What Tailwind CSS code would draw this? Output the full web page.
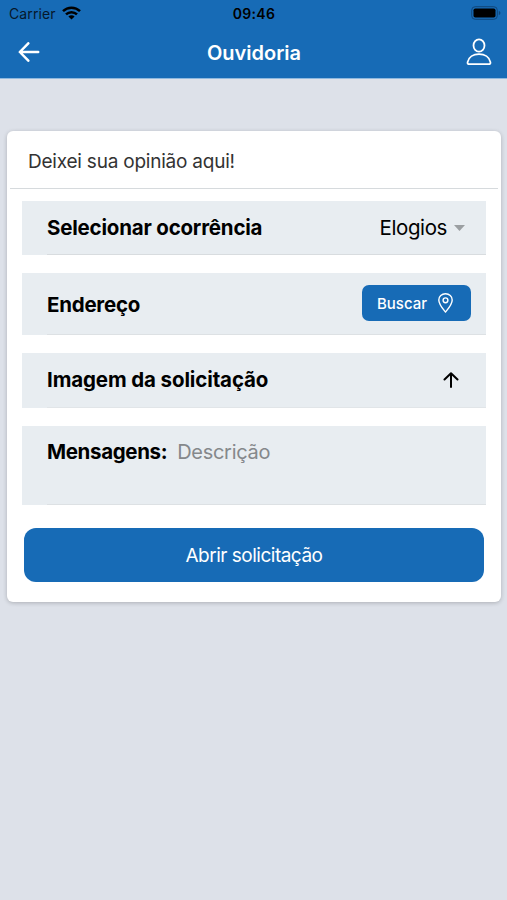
<!DOCTYPE html>
<html lang="pt-BR">
<head>
    <meta charset="UTF-8">
    <meta name="viewport" content="width=device-width, initial-scale=1.0">
    <title>Ouvidoria</title>
    <script src="https://cdn.jsdelivr.net/npm/@tailwindcss/browser@4"></script>
</head>
<body class="min-h-screen bg-[#dde1e9] font-['Inter',sans-serif] text-black">
    <!-- Cabeçalho -->
    <header class="h-[79px] bg-[#176bb6] border-b border-[#8fb9df]">
        <div class="grid grid-cols-3 items-center h-[27px] pl-[7px] pr-[6px] text-[#06182b]">
            <div class="flex items-center gap-[6px] pl-[2px]">
                <span class="text-[14px] tracking-[0.1px]">Carrier</span>
                <svg class="w-[19px] h-[14px] mb-[2px]" viewBox="0 0 19 14" fill="none" stroke="black" stroke-width="2.5">
                    <path d="M1 5.200a12.200 12.200 0 0 1 17 0"/>
                    <path d="M4 8.400a7.900 7.900 0 0 1 11 0"/>
                    <path d="M9.500 13.600 6.400 10.500a4.400 4.400 0 0 1 6.200 0Z" fill="black" stroke="none"/>
                </svg>
            </div>
            <span class="text-center text-[14px] font-semibold tracking-[0.35px] text-black">09:46</span>
            <svg class="justify-self-end w-[30px] h-[14px] mb-px" viewBox="0 0 30 14">
                <rect x=".7" y=".7" width="25.6" height="12.6" rx="3.5" fill="none" stroke="#10477b"/>
                <rect x="2.5" y="2.5" width="22" height="9" rx="1.8" fill="black"/>
                <path d="M27.800 5v4c1-.4 1.600-1.100 1.600-2s-.6-1.600-1.600-2Z" fill="#10477b"/>
            </svg>
        </div>
        <div class="grid grid-cols-3 items-center h-[50px] pl-[18px] pr-[15px] text-white">
            <button class="justify-self-start">
                <svg class="w-[22px] h-[20px]" viewBox="0 0 22 20" fill="none" stroke="currentColor" stroke-width="2.5" stroke-linecap="round" stroke-linejoin="round">
                    <path d="M10.300 1.300 1.800 10l8.500 8.700M2 10h18.200"/>
                </svg>
            </button>
            <h1 class="text-center text-[20px] font-semibold pt-px -ml-[2px]">Ouvidoria</h1>
            <button class="justify-self-end">
                <svg class="w-[26px] h-[28px]" viewBox="0 0 26 28" fill="none" stroke="currentColor" stroke-width="1.8" stroke-linejoin="round">
                    <ellipse cx="13" cy="7.5" rx="5.5" ry="6.2"/>
                    <path d="M3.300 26.200c-1.400 0-2-.9-1.700-2.100C2.700 19.200 7.300 16.200 13 16.200s10.300 3 11.400 7.900c.3 1.200-.3 2.100-1.700 2.100Z"/>
                </svg>
            </button>
        </div>
    </header>

    <!-- Formulário -->
    <main class="mt-[52px] ml-[7px] mr-[6px] h-[471px] rounded-[6px] bg-white shadow-[0_1px_4px_rgba(0,0,0,0.22)]">
        <div class="mx-[3px] flex items-center h-[58px] pl-[18px] pt-[5px] border-b border-[#d6dadd]">
            <p class="text-[19px] text-[#333] tracking-[-0.22px]">Deixei sua opinião aqui!</p>
        </div>

        <div class="flex flex-col gap-[18px] pt-3 px-[15px]">
            <div class="bg-[#e8edf1] pl-[25px]">
                <div class="flex items-center justify-between h-[54px] pr-[21px] border-b border-[#d8dcdf]">
                    <span class="text-[20.5px] font-bold tracking-[-0.2px] pt-[2px]">Selecionar ocorrência</span>
                    <div class="flex items-center gap-[7px]">
                        <span class="text-[20.5px] tracking-[-0.4px] pt-[2px]">Elogios</span>
                        <svg class="w-[11px] h-[6px]" viewBox="0 0 11 6" fill="#9b9fa2"><path d="M0 0h11L5.500 6Z"/></svg>
                    </div>
                </div>
            </div>

            <div class="bg-[#e8edf1] pl-[25px]">
                <div class="flex items-center justify-between h-[62px] pr-[15px] border-b border-[#dde1e4]">
                    <span class="text-[20.5px] font-bold tracking-[-0.25px] pt-[4px]">Endereço</span>
                    <button class="flex items-center justify-between w-[109px] h-[36px] pl-[15px] pr-[18px] mb-px rounded-[7px] bg-[#176bb6] text-white">
                        <span class="text-[15px] font-medium pt-[2px]">Buscar</span>
                        <svg class="w-[15px] h-[20px]" viewBox="0 0 15 20" fill="none" stroke="currentColor" stroke-width="1.4">
                            <path d="M7.500.8C3.700.8.8 3.400.8 7c0 4.500 4.600 9.500 6.700 12.100C9.600 16.500 14.200 11.500 14.200 7c0-3.600-2.900-6.200-6.700-6.200Z" stroke-linejoin="round"/>
                            <circle cx="7.500" cy="7.300" r="2.400"/>
                        </svg>
                    </button>
                </div>
            </div>

            <div class="bg-[#e8edf1] pl-[25px]">
                <div class="flex items-center justify-between h-[55px] pr-[27px] border-b border-[#e1e5e8]">
                    <span class="text-[20.5px] font-bold tracking-[-0.12px] pt-px">Imagem da solicitação</span>
                    <svg class="w-[16px] h-[16px]" viewBox="0 0 16 16" fill="none" stroke="black" stroke-width="2" stroke-linecap="round" stroke-linejoin="round">
                        <path d="M1.500 7.500 8 1.200l6.500 6.300M8 1.500v13.500"/>
                    </svg>
                </div>
            </div>

            <div class="bg-[#e8edf1] pl-[25px]">
                <div class="flex items-start gap-[10px] h-[79px] pt-[11px] border-b border-[#dde1e4]">
                    <span class="text-[20.5px] font-bold tracking-[-0.35px]">Mensagens:</span>
                    <span class="text-[20px] leading-[31px] text-[#85888b] tracking-[-0.3px]">Descrição</span>
                </div>
            </div>
        </div>

        <button class="block w-[460px] h-[54px] mt-[23px] ml-[17px] pt-[2px] rounded-[12px] bg-[#176bb6] text-[19px] tracking-[-0.5px] text-white">Abrir solicitação</button>
    </main>
</body>
</html>
